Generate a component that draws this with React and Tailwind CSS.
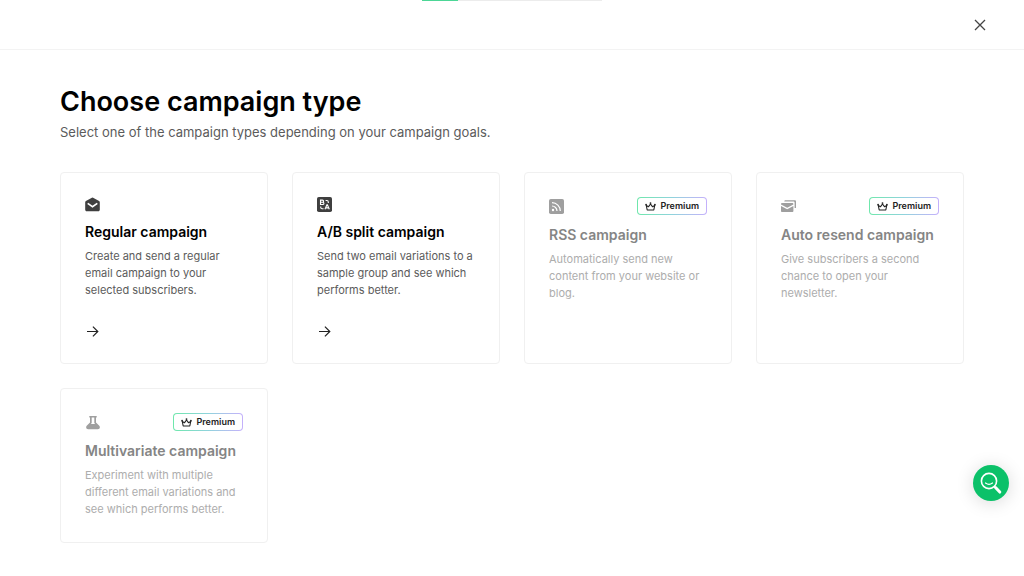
import React from 'react';

const MailIcon = () => (
  <svg viewBox="0 0 15 15" className="w-[15px] h-[15px]" fill="currentColor" aria-hidden="true">
    <path d="M6.900.7a1.200 1.200 0 0 1 1.200 0l6 3.300c.4.200.7.7.7 1.200v7.600c0 .9-.7 1.500-1.500 1.500H1.700c-.8 0-1.500-.6-1.500-1.500V5.200c0-.5.3-1 .7-1.200z" />
    <path d="M2.700 6.300 7.500 9.700l4.800-3.400" fill="none" stroke="#fff" strokeWidth="1.600" />
  </svg>
);

const SplitIcon = () => (
  <svg viewBox="0 0 15 15" className="w-[15px] h-[15px]" aria-hidden="true">
    <rect width="15" height="15" rx="1.800" fill="currentColor" />
    <g fill="none" stroke="#fff" strokeWidth="1.100">
      <path d="M3.500 3.100h2a1.100 1.100 0 0 1 0 2.200h-2zM3.500 5.300h2.300a1.100 1.100 0 0 1 0 2.200H3.500z" />
      <path d="m8 12.300 1.900-4.500h.5l1.900 4.500M8.700 10.900h3" />
      <path d="M8.600 3.500h1.300c.9 0 1.400.5 1.400 1.400v1M6.500 11.700H5.100c-.9 0-1.400-.5-1.400-1.400v-.8" />
    </g>
  </svg>
);

const RssIcon = () => (
  <svg viewBox="0 0 15 15" className="w-[15px] h-[15px]" aria-hidden="true">
    <rect width="15" height="15" rx="1.800" fill="currentColor" />
    <circle cx="4" cy="11" r="1.200" fill="#fff" />
    <path d="M3 7a5 5 0 0 1 5 5M3 3.700a8.300 8.300 0 0 1 8.300 8.300" fill="none" stroke="#fff" strokeWidth="1.200" />
  </svg>
);

const ResendIcon = () => (
  <svg viewBox="0 0 15 15" className="w-[15px] h-[15px]" fill="currentColor" aria-hidden="true">
    <path d="M3.300 2.400c0-.7.500-1.200 1.200-1.200h9.300c.7 0 1.200.5 1.200 1.200V9h-1.400V3.600c0-.7-.5-1.200-1.200-1.200z" />
    <path d="M0 5.200C0 4.500.5 4 1.200 4h10c.7 0 1.200.5 1.200 1.200v.4L6.200 8.800 0 5.600z" />
    <path d="M0 7l6.200 3.300L12.400 7v4.900c0 .7-.5 1.200-1.200 1.200h-10C.5 13.100 0 12.600 0 11.900z" />
  </svg>
);

const FlaskIcon = () => (
  <svg viewBox="0 0 15 15" className="w-[15px] h-[15px]" fill="currentColor" aria-hidden="true">
    <path d="M4.300 1h7.400v1.500H11v5l3.300 3.300c1.200 1.300.4 3.400-1.500 3.400H3.200c-1.900 0-2.700-2.100-1.500-3.400L5 7.500v-5h-.7zM6.700 2.500v5.600L5.900 9h4.200l-.8-.9V2.500z" fillRule="evenodd" />
  </svg>
);

const CrownIcon = () => (
  <svg viewBox="0 0 12 12" className="w-[11px] h-[11px]" fill="none" stroke="currentColor" strokeWidth="1.200" strokeLinejoin="round" aria-hidden="true">
    <path d="M2.400 9.800h7.200l1-5-2.500 1.400L6 3.300 3.900 6.200 1.400 4.800z" />
    <circle cx="1.200" cy="4" r="0.400" />
    <circle cx="6" cy="2.300" r="0.400" />
    <circle cx="10.800" cy="4" r="0.400" />
  </svg>
);

const ArrowIcon = () => (
  <svg viewBox="0 0 15 15" className="w-[15px] h-[15px] text-[#222]" fill="none" stroke="currentColor" strokeWidth="1.200" aria-hidden="true">
    <path d="M2 7.500h10.500M7.900 2.600l4.900 4.900-4.900 4.900" />
  </svg>
);

const campaigns = [
  {
    title: 'Regular campaign',
    description: 'Create and send a regular email campaign to your selected subscribers.',
    icon: MailIcon,
  },
  {
    title: 'A/B split campaign',
    description: 'Send two email variations to a sample group and see which performs better.',
    icon: SplitIcon,
  },
  {
    title: 'RSS campaign',
    description: 'Automatically send new content from your website or blog.',
    icon: RssIcon,
    premium: true,
  },
  {
    title: 'Auto resend campaign',
    description: 'Give subscribers a second chance to open your newsletter.',
    icon: ResendIcon,
    premium: true,
  },
  {
    title: 'Multivariate campaign',
    description: 'Experiment with multiple different email variations and see which performs better.',
    icon: FlaskIcon,
    premium: true,
  },
];

const PremiumBadge = () => (
  <span className="rounded bg-linear-to-r from-[#6ee7ab] via-[#8fd3dc] to-[#c4b0fb] p-px">
    <span className="flex items-center gap-1 h-4 px-[7px] rounded-[3px] bg-white text-[#222] text-[9px] font-semibold">
      <CrownIcon /> Premium
    </span>
  </span>
);

const CampaignCard = ({ campaign }) => {
  const { title, description, premium, icon: Icon } = campaign;
  return (
    <button
      type="button"
      className="flex flex-col items-stretch justify-start p-6 text-left bg-white border border-[#f0f0f0] rounded"
    >
      <span className="flex items-center justify-between">
        <span className={premium ? 'text-[#9f9f9f]' : 'text-[#3f3f3f]'}>
          <Icon />
        </span>
        {premium && <PremiumBadge />}
      </span>
      <span className={`mt-2.5 text-[14px] leading-5 font-semibold ${premium ? 'text-[#858585]' : 'text-black'}`}>
        {title}
      </span>
      <span className={`mt-1.5 text-[11px] leading-[17px] ${premium ? 'text-[#adadad]' : 'text-[#5b5b5b]'}`}>
        {description}
      </span>
      {!premium && (
        <span className="mt-[25px]">
          <ArrowIcon />
        </span>
      )}
    </button>
  );
};

const App = () => {
  return (
    <div className="min-h-screen bg-white font-['Inter',sans-serif]">
      <header className="relative flex items-center justify-end h-[50px] px-9 border-b border-[#f3f3f3]">
        <div className="absolute top-0 inset-x-0 flex justify-center">
          <div className="w-[180px] h-px bg-[#ececec]">
            <div className="w-1/5 h-px bg-[#4cd696]" />
          </div>
        </div>
        <button type="button" aria-label="Close" className="text-[#444]">
          <svg viewBox="0 0 16 16" className="w-4 h-4" fill="none" stroke="currentColor" strokeWidth="1.300" aria-hidden="true">
            <path d="m3 3 10 10M13 3 3 13" />
          </svg>
        </button>
      </header>

      <main className="px-[60px] pt-8 pb-8">
        <h1 className="text-[27px] leading-10 font-semibold text-black">Choose campaign type</h1>
        <p className="text-[13px] leading-5 text-[#5b5b5b]">
          Select one of the campaign types depending on your campaign goals.
        </p>
        <div className="grid grid-cols-4 gap-6 mt-[30px]">
          {campaigns.map((campaign) => (
            <CampaignCard key={campaign.title} campaign={campaign} />
          ))}
        </div>
      </main>

      <button
        type="button"
        aria-label="Help"
        className="fixed right-[15px] bottom-[75px] flex items-center justify-center w-9 h-9 rounded-full bg-[#0bc169] shadow-[0_2px_18px_rgba(0,0,0,0.15)]"
      >
        <svg viewBox="0 0 24 24" className="w-6 h-6" fill="none" stroke="#fff" aria-hidden="true">
          <circle cx="10" cy="10" r="7.600" strokeWidth="1.600" />
          <path d="M6.500 12c2 1.500 5 1.500 7 0" strokeWidth="1.200" strokeLinecap="round" />
          <path d="m16.500 16.500 4.300 4.600" strokeWidth="3" strokeLinecap="round" />
        </svg>
      </button>
    </div>
  );
};

export default App;
